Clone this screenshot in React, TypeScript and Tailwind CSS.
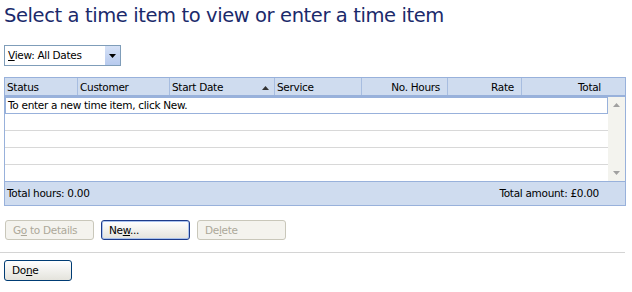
import React from 'react';

const columns = [
  { label: 'Status', w: 'w-[73px]', align: 'text-left' },
  { label: 'Customer', w: 'w-[92px]', align: 'text-left' },
  { label: 'Start Date', w: 'w-[105px]', align: 'text-left', sorted: true },
  { label: 'Service', w: 'w-[87px]', align: 'text-left' },
  { label: 'No. Hours', w: 'w-[86px]', align: 'text-right' },
  { label: 'Rate', w: 'w-[74px]', align: 'text-right' },
  { label: 'Total', w: 'flex-1', align: 'text-right', last: true },
];

const XpButton: React.FC<{ children: React.ReactNode; disabled?: boolean; focused?: boolean; className?: string }> = ({ children, disabled, focused, className }) => (
  <button
    className={`h-[20px] rounded-[3px] border text-left pl-[7px] text-[10.5px] tracking-[-0.3px] leading-none ${className ?? ''} ${
      disabled
        ? 'border-[#c9c7ba] bg-[#f4f3ee] text-[#aca899]'
        : focused
        ? 'border-[#1d3b8a] bg-gradient-to-b from-white to-[#e4e3dc] text-black shadow-[inset_0_0_0_1px_#a9c2ee]'
        : 'border-[#003c74] bg-gradient-to-b from-white to-[#e4e3dc] text-black'
    }`}
  >
    {children}
  </button>
);

const App: React.FC = () => {
  return (
    <div className="w-[632px] h-[292px] bg-white overflow-hidden font-['DejaVu_Sans',sans-serif] text-[10.5px] tracking-[-0.3px] text-black">
      {/* Title */}
      <h1 className="pl-[4px] pt-[4px] h-[42px] text-[19.5px] leading-[24px] text-[#1b2a6b] tracking-[-0.4px]">
        Select a time item to view or enter a time item
      </h1>

      {/* View dropdown */}
      <div className="ml-[4px] mt-[3px] w-[117px] h-[21px] border border-[#7f9db9] flex items-center">
        <span className="flex-1 pl-[3px]">
          <span className="underline">V</span>iew: All Dates
        </span>
        <span className="w-[15px] h-[19px] bg-gradient-to-b from-[#d5e1f6] to-[#b7caee] flex items-center justify-center">
          <svg width="7" height="4" viewBox="0 0 7 4"><path d="M0 0h7L3.5 4z" fill="#000" /></svg>
        </span>
      </div>

      {/* Table */}
      <div className="ml-[4px] mt-[11px] w-[622px] border border-[#98b1db]">
        <div className="h-[19px] flex bg-[#cfdcef] border-b-2 border-[#98b1db]">
          {columns.map((c) => (
            <div
              key={c.label}
              className={`${c.w} flex items-center pt-[3px] ${c.align === 'text-right' ? 'justify-end' : 'pl-[2px]'} ${c.last ? 'pr-[24px]' : c.align === 'text-right' ? 'pr-[7px]' : ''} ${c.last ? '' : 'border-r border-[#a7bde0]'}`}
            >
              <span className={c.sorted ? 'flex-1' : ''}>{c.label}</span>
              {c.sorted && (
                <svg className="mr-[5px]" width="7" height="4" viewBox="0 0 7 4"><path d="M0 4h7L3.5 0z" fill="#333" /></svg>
              )}
            </div>
          ))}
        </div>
        <div className="flex h-[84px]">
          <div className="flex-1 flex flex-col">
            <div className="h-[17px] border border-[#98b1db] pl-[2px] flex items-center">
              To enter a new time item, click New.
            </div>
            <div className="h-[17px] border-b border-[#d8d8d8]" />
            <div className="h-[17px] border-b border-[#d8d8d8]" />
            <div className="h-[17px] border-b border-[#d8d8d8]" />
            <div className="flex-1" />
          </div>
          <div className="w-[17px] bg-[#f3f3ee] flex flex-col justify-between items-center py-[6px]">
            <svg width="7" height="4" viewBox="0 0 7 4"><path d="M0 4h7L3.5 0z" fill="#a0a0a0" /></svg>
            <svg width="7" height="4" viewBox="0 0 7 4"><path d="M0 0h7L3.5 4z" fill="#a0a0a0" /></svg>
          </div>
        </div>
        <div className="h-[24px] bg-[#cfdcef] border-t border-[#98b1db] flex items-center justify-between pl-[2px] pr-[26px]">
          <span>Total hours: 0.00</span>
          <span>Total amount: £0.00</span>
        </div>
      </div>

      {/* Action buttons */}
      <div className="ml-[5px] mt-[14px] flex gap-[7px]">
        <XpButton disabled className="w-[89px]">
          G<span className="underline">o</span> to Details
        </XpButton>
        <XpButton focused className="w-[89px]">
          Ne<span className="underline">w</span>...
        </XpButton>
        <XpButton disabled className="w-[89px]">
          De<span className="underline">l</span>ete
        </XpButton>
      </div>

      <div className="mt-[12px] w-[625px] border-t border-[#d4d4d4]" />

      <div className="ml-[4px] mt-[7px]">
        <XpButton className="w-[68px] h-[21px]">
          Do<span className="underline">n</span>e
        </XpButton>
      </div>
    </div>
  );
};

export default App;
